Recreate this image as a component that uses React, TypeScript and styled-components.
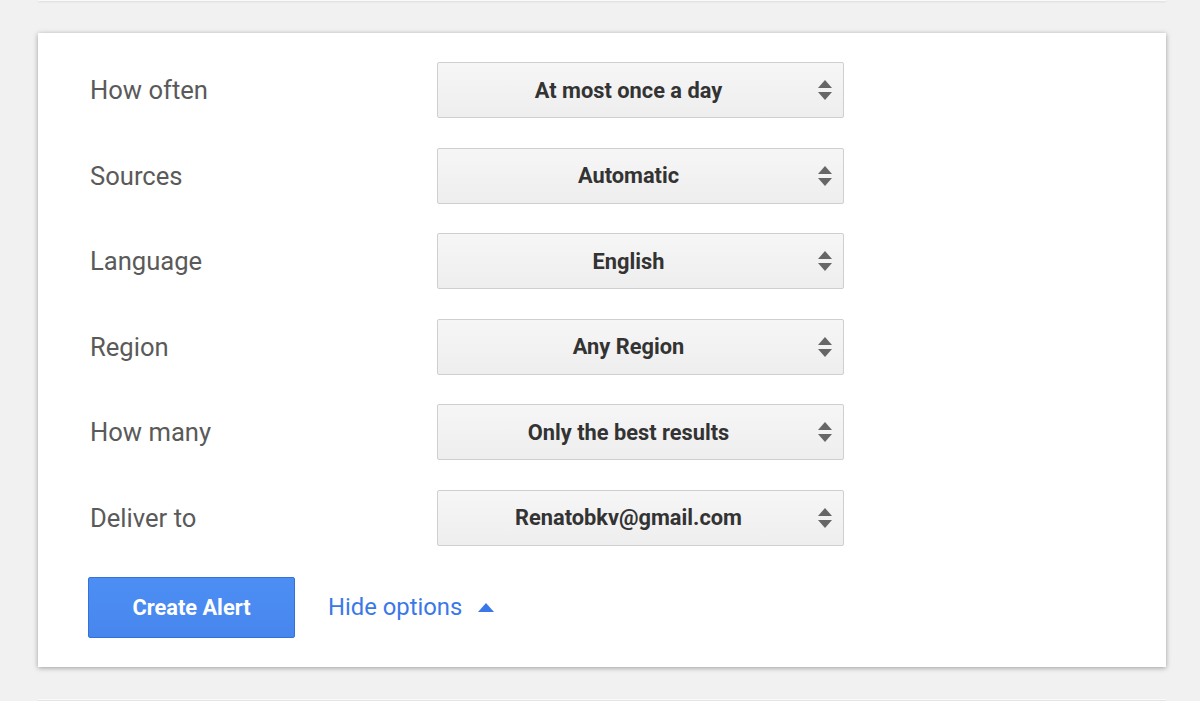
import React from "react";
import styled, { createGlobalStyle } from "styled-components";

const GlobalStyle = createGlobalStyle`
  html, body {
    margin: 0;
    padding: 0;
    background: #f1f1f1;
    font-family: Roboto, "Noto Sans", Arial, sans-serif;
  }
`;

const Page = styled.div`
  display: flex;
  flex-direction: column;
  gap: 32px;
  padding: 0 34px 0 38px;
  height: 701px;
  overflow: hidden;
`;

const EdgeCard = styled.div`
  height: 1px;
  background: #fafafa;
  box-shadow: 0 1px 2px rgba(0, 0, 0, 0.12);
  flex-shrink: 0;
`;

const Card = styled.div`
  background: #fff;
  box-shadow: 0 1px 5px rgba(0, 0, 0, 0.35);
  padding: 29px 50px 29px 50px;
  flex-shrink: 0;
`;

const Form = styled.div`
  display: grid;
  grid-template-columns: 349px 407px;
  grid-auto-rows: 56px;
  row-gap: 29.6px;
  align-items: center;
`;

const Label = styled.div`
  padding-left: 2px;
  font-size: 25.6px;
  color: #5a5a5a;
`;

const SelectBox = styled.div`
  position: relative;
  height: 56px;
  box-sizing: border-box;
  border: 1px solid #cfcfcf;
  border-radius: 2px;
  background: linear-gradient(#f6f6f6, #eeeeee);
  display: flex;
  align-items: center;
  justify-content: center;
  padding-right: 24px;
  font-size: 21.8px;
  font-weight: 700;
  color: #333;
`;

const Arrows = styled.svg`
  position: absolute;
  right: 10px;
  top: 50%;
  transform: translateY(-50%);
`;

const Actions = styled.div`
  display: flex;
  align-items: center;
  gap: 33px;
  margin-top: 31px;
`;

const Button = styled.button`
  width: 207px;
  height: 61px;
  border: 1px solid #3472d9;
  border-radius: 2px;
  background: linear-gradient(#4d8ef5, #4787ed);
  color: #fff;
  font-family: Roboto, Arial, sans-serif;
  font-size: 21.8px;
  font-weight: 700;
  cursor: pointer;
`;

const Link = styled.a`
  display: flex;
  align-items: center;
  gap: 16px;
  color: #3b78e7;
  font-size: 23.8px;
  text-decoration: none;
  cursor: pointer;
`;

const Select = ({ value }: { value: string }) => (
  <SelectBox>
    {value}
    <Arrows width="16" height="22" viewBox="0 0 16 22">
      <path d="M8 1 L15 9 H1 Z" fill="#666" />
      <path d="M1 13 H15 L8 21 Z" fill="#666" />
    </Arrows>
  </SelectBox>
);

const rows: [string, string][] = [
  ["How often", "At most once a day"],
  ["Sources", "Automatic"],
  ["Language", "English"],
  ["Region", "Any Region"],
  ["How many", "Only the best results"],
  ["Deliver to", "Renatobkv@gmail.com"],
];

export default function App() {
  return (
    <>
      <GlobalStyle />
      <Page>
        <EdgeCard />
        <Card>
          <Form>
            {rows.map(([label, value]) => (
              <React.Fragment key={label}>
                <Label>{label}</Label>
                <Select value={value} />
              </React.Fragment>
            ))}
          </Form>
          <Actions>
            <Button>Create Alert</Button>
            <Link>
              Hide options
              <svg width="16" height="9" viewBox="0 0 16 9">
                <path d="M8 0 L16 9 H0 Z" fill="#3b78e7" />
              </svg>
            </Link>
          </Actions>
        </Card>
        <EdgeCard />
      </Page>
    </>
  );
}
